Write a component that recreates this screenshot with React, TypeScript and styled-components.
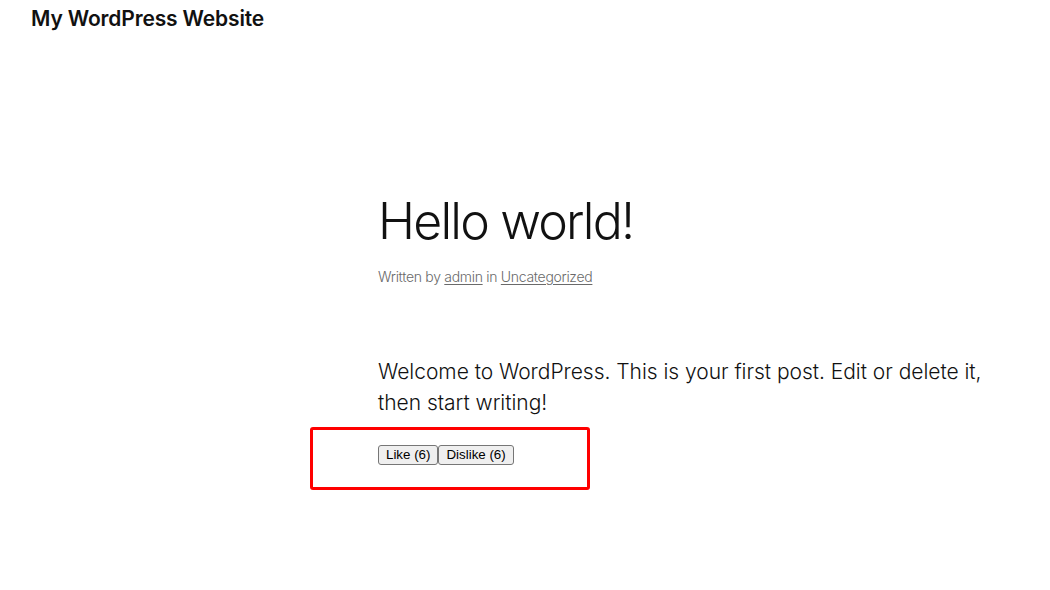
import React from "react";
import styled, { createGlobalStyle } from "styled-components";

const Global = createGlobalStyle`
  html, body { margin: 0; padding: 0; background: #ffffff; }
  body { font-family: Inter, "Noto Sans", sans-serif; color: #111111; }
`;

const Page = styled.div`
  width: 1050px;
  height: 590px;
  overflow: hidden;
  display: flex;
  flex-direction: column;
`;

const Header = styled.header`
  padding: 5px 31px 0;
`;

const SiteTitle = styled.div`
  font-size: 21px;
  font-weight: 600;
  line-height: 28px;
  letter-spacing: -0.15px;
  color: #111111;
`;

const Main = styled.main`
  padding: 156px 0 0 378px;
  display: flex;
  flex-direction: column;
`;

const Title = styled.h1`
  margin: 0;
  font-size: 50px;
  font-weight: 300;
  line-height: 64px;
  letter-spacing: -1.8px;
  color: #111111;
`;

const Meta = styled.div`
  margin-top: 14px;
  font-size: 14px;
  font-weight: 300;
  line-height: 20px;
  color: #6a6a6a;
  letter-spacing: -0.3px;
`;

const MetaLink = styled.a`
  color: #6a6a6a;
  text-decoration: underline;
  text-underline-offset: 2px;
`;

const Content = styled.div`
  margin-top: 69px;
  width: 620px;
  font-size: 21px;
  font-weight: 300;
  line-height: 31px;
  letter-spacing: -0.03px;
  color: #111111;
`;

const Para = styled.p`
  margin: 0;
`;

const Votes = styled.div`
  position: relative;
  margin-top: 27px;
  display: flex;
`;

const VoteButton = styled.button`
  font-family: "Liberation Sans", Arial, sans-serif;
  font-size: 13.33px;
  line-height: 16px;
  padding: 1px 7px;
  margin: 0;
  background: #efefef;
  color: #000000;
  border: 1px solid #767676;
  border-radius: 3px;
`;

const Highlight = styled.div`
  position: absolute;
  left: -68px;
  top: -18px;
  width: 274px;
  height: 57px;
  border: 3px solid #ff0000;
  border-radius: 3px;
  pointer-events: none;
`;

export default function App() {
  return (
    <Page>
      <Global />
      <Header>
        <SiteTitle>My WordPress Website</SiteTitle>
      </Header>
      <Main>
        <Title>Hello world!</Title>
        <Meta>
          Written by <MetaLink href="#">admin</MetaLink> in{" "}
          <MetaLink href="#">Uncategorized</MetaLink>
        </Meta>
        <Content>
          <Para>
            Welcome to WordPress. This is your first post. Edit or delete it,
            then start writing!
          </Para>
        </Content>
        <Votes>
          <VoteButton>Like (6)</VoteButton>
          <VoteButton>Dislike (6)</VoteButton>
          <Highlight />
        </Votes>
      </Main>
    </Page>
  );
}
